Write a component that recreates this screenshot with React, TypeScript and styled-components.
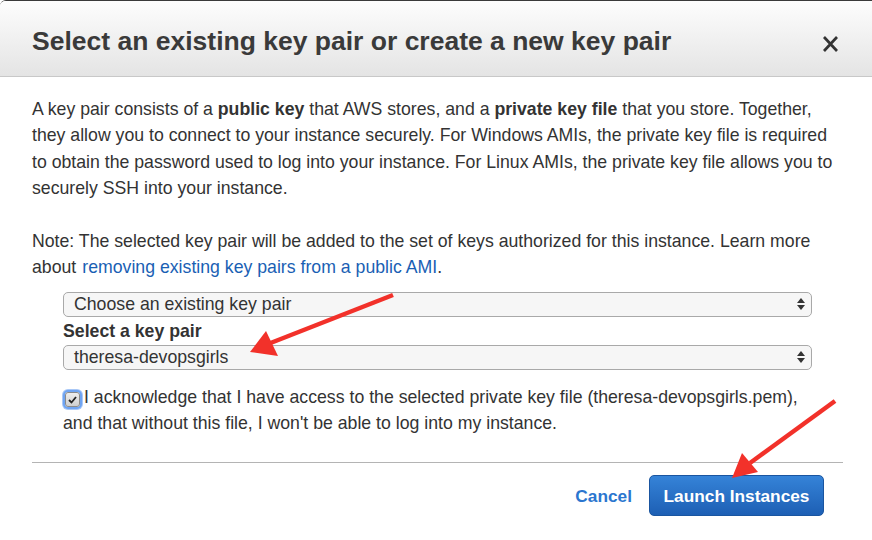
import React from "react";
import styled, { createGlobalStyle } from "styled-components";

const Global = createGlobalStyle`
  html, body { margin: 0; padding: 0; background: #fff; }
  body { font-family: "Liberation Sans", Arial, sans-serif; color: #333; }
`;

const Dialog = styled.div`
  position: relative;
  width: 872px;
  height: 540px;
  overflow: hidden;
  background: #fff;
  border-top: 1px solid #3a3a3a;
  border-top-left-radius: 6px;
  box-sizing: border-box;
  display: flex;
  flex-direction: column;
`;

const Header = styled.div`
  height: 76px;
  box-sizing: border-box;
  display: flex;
  align-items: center;
  justify-content: space-between;
  padding: 0 33px 0 32px;
  background: linear-gradient(#fdfdfd, #e4e4e4);
  border-bottom: 1px solid #c8c8c8;
`;

const Title = styled.h1`
  margin: 0;
  font-family: "Liberation Sans Narrow", "Liberation Sans", sans-serif;
  font-weight: 700;
  font-size: 26.5px;
  color: #3a3a3a;
  letter-spacing: 0;
  padding-top: 6px;
`;

const Close = styled.button`
  border: 0;
  background: none;
  padding: 0;
  width: 17px;
  height: 18px;
  display: flex;
  margin-top: 10px;
`;

const Body = styled.div`
  padding: 19px 0 0 32px;
  font-size: 17.7px;
  line-height: 26.3px;
  color: #333;
`;

const Para = styled.p`
  margin: 0 0 27px;
  white-space: nowrap;
`;

const Link = styled.a`
  color: #1a5fb4;
  text-decoration: none;
  margin-left: 6px;
`;

const Form = styled.div`
  padding: 0 0 0 63px;
  width: 749px;
  display: flex;
  flex-direction: column;
  margin-top: -16px;
`;

const Select = styled.div`
  height: 25px;
  box-sizing: border-box;
  border: 1px solid #a9a9a9;
  border-radius: 5px;
  background: #f6f6f6;
  display: flex;
  align-items: center;
  justify-content: space-between;
  padding: 0 5px 0 10px;
  font-size: 17.7px;
  color: #333;
`;

const Label = styled.div`
  font-weight: 700;
  font-size: 17.7px;
  color: #333;
  margin: 4px 0 4px;
  line-height: 20px;
`;

const Ack = styled.div`
  margin-top: 14px;
  font-size: 17.7px;
  line-height: 26.3px;
  color: #333;
  white-space: nowrap;
`;

const Check = styled.span`
  display: inline-flex;
  align-items: center;
  justify-content: center;
  width: 15px;
  height: 15px;
  box-sizing: border-box;
  border: 1px solid #8a8a8a;
  border-radius: 3px;
  background: linear-gradient(#eee, #cfcfcf);
  box-shadow: 0 0 0 2px #6fa4f2, 0 0 0 3px #a9c8f7;
  vertical-align: -1px;
  margin: 0 4px 0 2px;
`;

const Divider = styled.div`
  margin: 26px 29px 0 32px;
  border-top: 1px solid #b4b4b4;
`;

const Footer = styled.div`
  display: flex;
  justify-content: flex-end;
  align-items: center;
  gap: 17px;
  padding: 12px 48px 0 0;
`;

const Cancel = styled.button`
  border: 0;
  background: none;
  padding: 0;
  font-family: "Liberation Sans", Arial, sans-serif;
  font-weight: 700;
  font-size: 17.3px;
  color: #2b76cf;
  margin-top: 2px;
`;

const Primary = styled.button`
  width: 175px;
  height: 41px;
  box-sizing: border-box;
  border: 1px solid #1a55a0;
  border-radius: 5px;
  background: linear-gradient(#3583d8, #1d5fb4);
  color: #fff;
  font-family: "Liberation Sans", Arial, sans-serif;
  font-weight: 700;
  font-size: 17.3px;
  padding: 2px 0 0;
`;

const Overlay = styled.svg`
  position: absolute;
  left: 0;
  top: 0;
  pointer-events: none;
`;

const Arrows = () => (
  <svg width="10" height="14" viewBox="0 0 10 14">
    <path d="M5 1 L9 6 H1 Z" fill="#333" />
    <path d="M5 13 L9 8 H1 Z" fill="#333" />
  </svg>
);

export default function App() {
  return (
    <>
      <Global />
      <Dialog>
        <Header>
          <Title>Select an existing key pair or create a new key pair</Title>
          <Close aria-label="Close">
            <svg width="17" height="18" viewBox="0 0 17 18">
              <path d="M2 2 L15 16 M15 2 L2 16" stroke="#333" strokeWidth="2.7" />
            </svg>
          </Close>
        </Header>
        <Body>
          <Para>
            A key pair consists of a <b>public key</b> that AWS stores, and a <b>private key file</b> that you store. Together,
            <br />
            they allow you to connect to your instance securely. For Windows AMIs, the private key file is required
            <br />
            to obtain the password used to log into your instance. For Linux AMIs, the private key file allows you to
            <br />
            securely SSH into your instance.
          </Para>
          <Para>
            Note: The selected key pair will be added to the set of keys authorized for this instance. Learn more
            <br />
            about<Link href="#">removing existing key pairs from a public AMI</Link>.
          </Para>
        </Body>
        <Form>
          <Select>
            <span>Choose an existing key pair</span>
            <Arrows />
          </Select>
          <Label>Select a key pair</Label>
          <Select>
            <span>theresa-devopsgirls</span>
            <Arrows />
          </Select>
          <Ack>
            <Check>
              <svg width="9" height="8" viewBox="0 0 9 8">
                <path d="M1 4 L3.5 6.5 L8 1" stroke="#222" strokeWidth="1.8" fill="none" />
              </svg>
            </Check>
            I acknowledge that I have access to the selected private key file (theresa-devopsgirls.pem),
            <br />
            and that without this file, I won't be able to log into my instance.
          </Ack>
        </Form>
        <Divider />
        <Footer>
          <Cancel>Cancel</Cancel>
          <Primary>Launch Instances</Primary>
        </Footer>
        <Overlay width="872" height="540">
          <line x1="393" y1="294" x2="268" y2="343" stroke="#f2312a" strokeWidth="4.5" />
          <path d="M250 351 L266 330 L278 355 Z" fill="#f2312a" />
          <line x1="835" y1="400" x2="750" y2="462" stroke="#f2312a" strokeWidth="4.5" />
          <path d="M732 477 L742 452 L758 471 Z" fill="#f2312a" />
        </Overlay>
      </Dialog>
    </>
  );
}
